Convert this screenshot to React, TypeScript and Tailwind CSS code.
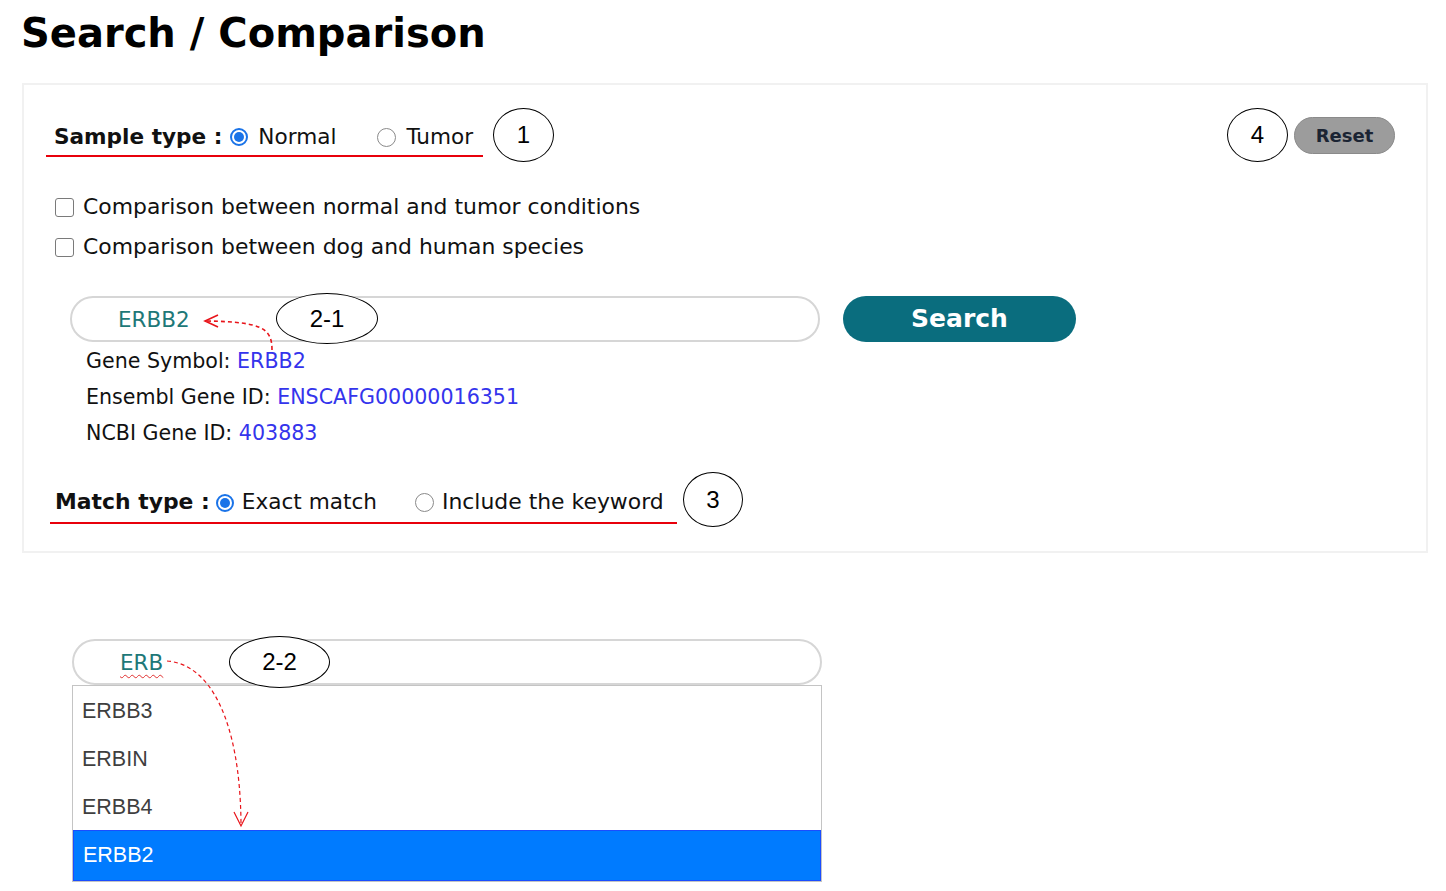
import React from "react";

const Radio = ({ checked }: { checked?: boolean }) =>
  checked ? (
    <span className="inline-flex items-center justify-center w-[18px] h-[18px] rounded-full border-2 border-[#1a73e8] bg-white">
      <span className="w-[10px] h-[10px] rounded-full bg-[#1a73e8]" />
    </span>
  ) : (
    <span className="inline-block w-[19px] h-[19px] rounded-full border border-[#8a8a8a] bg-white" />
  );

const Checkbox = () => (
  <span className="inline-block w-[19px] h-[19px] rounded-[3px] border border-[#7a7a7a] bg-white" />
);

const Oval = ({ label, className }: { label: string; className: string }) => (
  <div
    className={
      "flex items-center justify-center rounded-[50%] border-[1.5px] border-black bg-white text-[24px] text-black font-['Liberation_Sans',sans-serif] " +
      className
    }
  >
    {label}
  </div>
);

export default function App() {
  return (
    <div className="relative w-[1446px] h-[891px] bg-white overflow-hidden font-['DejaVu_Sans',Verdana,sans-serif] text-[#111]">
      {/* Title */}
      <div className="h-[83px] pl-[21px] pt-[9px]">
        <h1 className="text-[40px] leading-[48px] font-bold text-black">Search / Comparison</h1>
      </div>

      {/* Panel */}
      <div className="ml-[22px] w-[1406px] h-[470px] border-2 border-[#f1f1f1] flex flex-col">
        {/* Row 1 */}
        <div className="mt-[23px] h-[54px] flex items-start">
          <div className="ml-[22px] mt-[6px] w-[437px] h-[43px] pt-[5px] border-b-2 border-[#e8000b] flex items-center pl-[8px] text-[21.6px]">
            <span className="font-bold text-[#111]">Sample type :</span>
            <span className="ml-[8px] flex"><Radio checked /></span>
            <span className="ml-[10px]">Normal</span>
            <span className="ml-[41px] flex"><Radio /></span>
            <span className="ml-[10px]">Tumor</span>
          </div>
          <Oval label="1" className="ml-[10px] w-[61px] h-[54px]" />
          <div className="flex-1" />
          <Oval label="4" className="w-[61px] h-[54px]" />
          <button className="ml-[6px] mt-[9px] w-[101px] h-[37px] rounded-full bg-[#9c9c9c] border border-[#8a8a8a] text-[18px] font-bold text-[#1b2433] mr-[31px]">
            Reset
          </button>
        </div>

        {/* Checkboxes */}
        <div className="mt-[26px] h-[38px] flex items-center pl-[31px] text-[21.9px]">
          <Checkbox />
          <span className="ml-[9px]">Comparison between normal and tumor conditions</span>
        </div>
        <div className="h-[40px] pt-[2px] flex items-center pl-[31px] text-[21.9px]">
          <Checkbox />
          <span className="ml-[9px]">Comparison between dog and human species</span>
        </div>

        {/* Search row */}
        <div className="relative mt-[30px] h-[46px] flex pl-[46px]">
          <div className="w-[750px] h-[46px] rounded-full border-2 border-[#d6d6d6] flex items-center pl-[46px] pt-[2px] text-[21.5px] text-[#1e7878]">
            ERBB2
          </div>
          <button className="ml-[23px] w-[233px] h-[46px] rounded-full bg-[#0a6d7e] text-white text-[25px] font-bold">
            Search
          </button>
          <Oval label="2-1" className="absolute left-[252px] top-[-3px] w-[102px] h-[51px]" />
        </div>

        {/* Info */}
        <div className="pl-[62px] pt-[1px] text-[20.6px] leading-[36px]">
          <div>
            Gene Symbol: <span className="text-[#3434ec]">ERBB2</span>
          </div>
          <div>
            Ensembl Gene ID: <span className="text-[#3434ec]">ENSCAFG00000016351</span>
          </div>
          <div>
            NCBI Gene ID: <span className="text-[#3434ec]">403883</span>
          </div>
        </div>

        {/* Match type */}
        <div className="mt-[21px] h-[55px] flex items-start">
          <div className="ml-[26px] mt-[8px] w-[627px] h-[44px] pt-[3px] border-b-2 border-[#e8000b] flex items-center pl-[5px] text-[21.9px]">
            <span className="font-bold text-[#111]">Match type :</span>
            <span className="ml-[6px] flex"><Radio checked /></span>
            <span className="ml-[8px] text-[21.6px]">Exact match</span>
            <span className="ml-[38px] flex"><Radio /></span>
            <span className="ml-[8px]">Include the keyword</span>
          </div>
          <Oval label="3" className="ml-[6px] w-[60px] h-[55px]" />
        </div>
      </div>

      {/* Autocomplete demo */}
      <div className="relative mt-[86px] ml-[72px] w-[750px]">
        <div className="h-[46px] rounded-full border-2 border-[#d6d6d6] flex items-center pl-[46px] pt-[2px] text-[21.5px] text-[#1e7878]">
          <span className="underline decoration-wavy decoration-[#e03030] decoration-1 underline-offset-[4px]">ERB</span>
        </div>
        <Oval label="2-2" className="absolute left-[157px] top-[-3px] w-[101px] h-[52px]" />
        <div className="border border-[#c4c4c4] font-['Liberation_Sans',Arial,sans-serif] text-[21.5px] text-[#3f3f3f]">
          <div className="h-[48px] flex items-center pl-[9px] pt-[2px]">ERBB3</div>
          <div className="h-[48px] flex items-center pl-[9px] pt-[2px]">ERBIN</div>
          <div className="h-[48px] flex items-center pl-[9px] pt-[2px]">ERBB4</div>
          <div className="h-[51px] flex items-center pl-[9px] bg-[#007bff] border border-[#1a4dff] text-white">ERBB2</div>
        </div>
      </div>

      {/* Arrows */}
      <svg className="absolute left-0 top-0 pointer-events-none" width="1446" height="891">
        <path d="M272 350 C272 328 262 322 207 321" fill="none" stroke="#e8141a" strokeWidth="1.6" strokeDasharray="4 3" />
        <path d="M218 315 L205 321 L218 327" fill="none" stroke="#e8141a" strokeWidth="1.6" />
        <path d="M167 661 C210 664 240 720 241 823" fill="none" stroke="#e8141a" strokeWidth="1.2" strokeDasharray="4 3" />
        <path d="M234 812 L241 826 L248 812" fill="none" stroke="#e8141a" strokeWidth="1.2" />
      </svg>
    </div>
  );
}
